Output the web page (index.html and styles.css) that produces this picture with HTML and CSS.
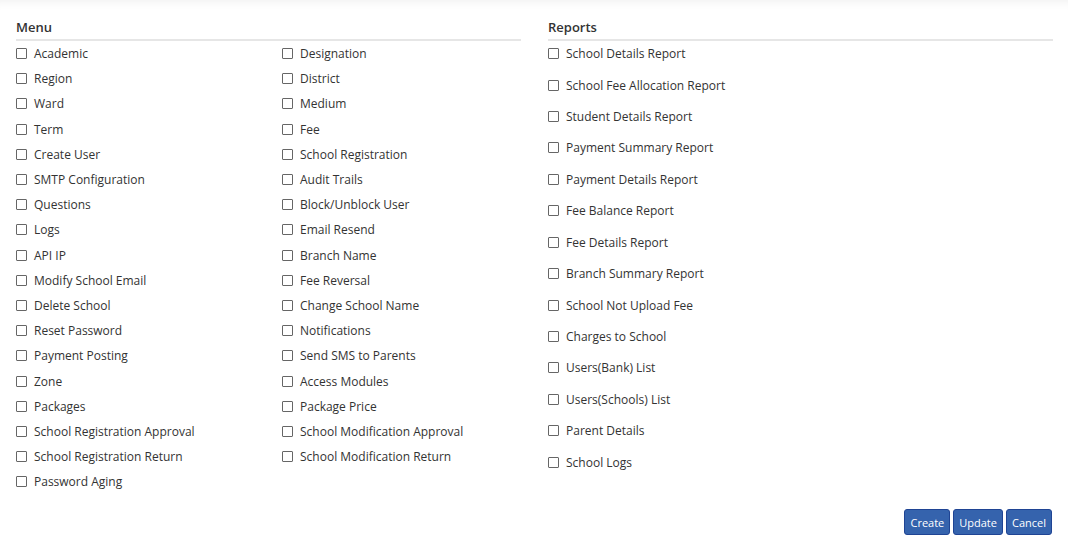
FILE: index.html
```html
<!DOCTYPE html>
<html>
<head>
<meta charset="utf-8">
<link rel="stylesheet" href="styles.css">
</head>
<body>
<div class="card">
  <div class="sections">
    <section class="section">
      <h3 class="title">Menu</h3>
      <div class="menu-grid">
        <div class="col">
          <label class="item"><span class="box"></span>Academic</label>
          <label class="item"><span class="box"></span>Region</label>
          <label class="item"><span class="box"></span>Ward</label>
          <label class="item"><span class="box"></span>Term</label>
          <label class="item"><span class="box"></span>Create User</label>
          <label class="item"><span class="box"></span>SMTP Configuration</label>
          <label class="item"><span class="box"></span>Questions</label>
          <label class="item"><span class="box"></span>Logs</label>
          <label class="item"><span class="box"></span>API IP</label>
          <label class="item"><span class="box"></span>Modify School Email</label>
          <label class="item"><span class="box"></span>Delete School</label>
          <label class="item"><span class="box"></span>Reset Password</label>
          <label class="item"><span class="box"></span>Payment Posting</label>
          <label class="item"><span class="box"></span>Zone</label>
          <label class="item"><span class="box"></span>Packages</label>
          <label class="item"><span class="box"></span>School Registration Approval</label>
          <label class="item"><span class="box"></span>School Registration Return</label>
          <label class="item"><span class="box"></span>Password Aging</label>
        </div>
        <div class="col">
          <label class="item"><span class="box"></span>Designation</label>
          <label class="item"><span class="box"></span>District</label>
          <label class="item"><span class="box"></span>Medium</label>
          <label class="item"><span class="box"></span>Fee</label>
          <label class="item"><span class="box"></span>School Registration</label>
          <label class="item"><span class="box"></span>Audit Trails</label>
          <label class="item"><span class="box"></span>Block/Unblock User</label>
          <label class="item"><span class="box"></span>Email Resend</label>
          <label class="item"><span class="box"></span>Branch Name</label>
          <label class="item"><span class="box"></span>Fee Reversal</label>
          <label class="item"><span class="box"></span>Change School Name</label>
          <label class="item"><span class="box"></span>Notifications</label>
          <label class="item"><span class="box"></span>Send SMS to Parents</label>
          <label class="item"><span class="box"></span>Access Modules</label>
          <label class="item"><span class="box"></span>Package Price</label>
          <label class="item"><span class="box"></span>School Modification Approval</label>
          <label class="item"><span class="box"></span>School Modification Return</label>
        </div>
      </div>
    </section>
    <section class="section">
      <h3 class="title">Reports</h3>
      <div class="col reports">
        <label class="item"><span class="box"></span>School Details Report</label>
        <label class="item"><span class="box"></span>School Fee Allocation Report</label>
        <label class="item"><span class="box"></span>Student Details Report</label>
        <label class="item"><span class="box"></span>Payment Summary Report</label>
        <label class="item"><span class="box"></span>Payment Details Report</label>
        <label class="item"><span class="box"></span>Fee Balance Report</label>
        <label class="item"><span class="box"></span>Fee Details Report</label>
        <label class="item"><span class="box"></span>Branch Summary Report</label>
        <label class="item"><span class="box"></span>School Not Upload Fee</label>
        <label class="item"><span class="box"></span>Charges to School</label>
        <label class="item"><span class="box"></span>Users(Bank) List</label>
        <label class="item"><span class="box"></span>Users(Schools) List</label>
        <label class="item"><span class="box"></span>Parent Details</label>
        <label class="item"><span class="box"></span>School Logs</label>
      </div>
    </section>
  </div>
  <div class="actions">
    <button class="btn">Create</button>
    <button class="btn">Update</button>
    <button class="btn">Cancel</button>
  </div>
</div>
</body>
</html>
```
FILE: styles.css
```css
* { box-sizing: border-box; }
html, body {
  margin: 0;
  padding: 0;
  background: #ffffff;
}
body {
  font-family: "Open Sans", "Noto Sans", sans-serif;
  font-size: 12px;
  color: #333;
  width: 1068px;
  height: 540px;
  overflow: hidden;
}
.card {
  height: 540px;
  padding: 16px 16px 5px 16px;
  background: #fff;
  box-shadow: inset 0 10px 10px -8px rgba(0,0,0,0.06);
  display: flex;
  flex-direction: column;
}
.sections {
  display: grid;
  grid-template-columns: 505px 505px;
  column-gap: 27px;
  flex: 1;
}
.title {
  margin: 0;
  font-size: 13px;
  font-weight: 600;
  color: #333;
  line-height: 22px;
  padding-bottom: 1px;
  border-bottom: 2px solid #e6e6e6;
}
.menu-grid {
  display: grid;
  grid-template-columns: 266px 1fr;
}
.col {
  display: flex;
  flex-direction: column;
}
.item {
  display: flex;
  align-items: center;
  height: 25.2px;
  color: #333;
  white-space: nowrap;
}
.reports .item {
  margin-bottom: 6.25px;
}
.box {
  width: 11px;
  height: 11px;
  border: 1px solid #666;
  border-radius: 1px;
  margin-right: 7px;
  flex: none;
  background: #fff;
}
.actions {
  display: flex;
  justify-content: flex-end;
  gap: 3px;
}
.btn {
  font-family: "Open Sans", "Noto Sans", sans-serif;
  font-size: 11px;
  color: #fff;
  background: #3563ad;
  border: 1px solid #1f4494;
  border-radius: 3px;
  height: 26px;
  padding: 0 5px;
  cursor: pointer;
}
```
